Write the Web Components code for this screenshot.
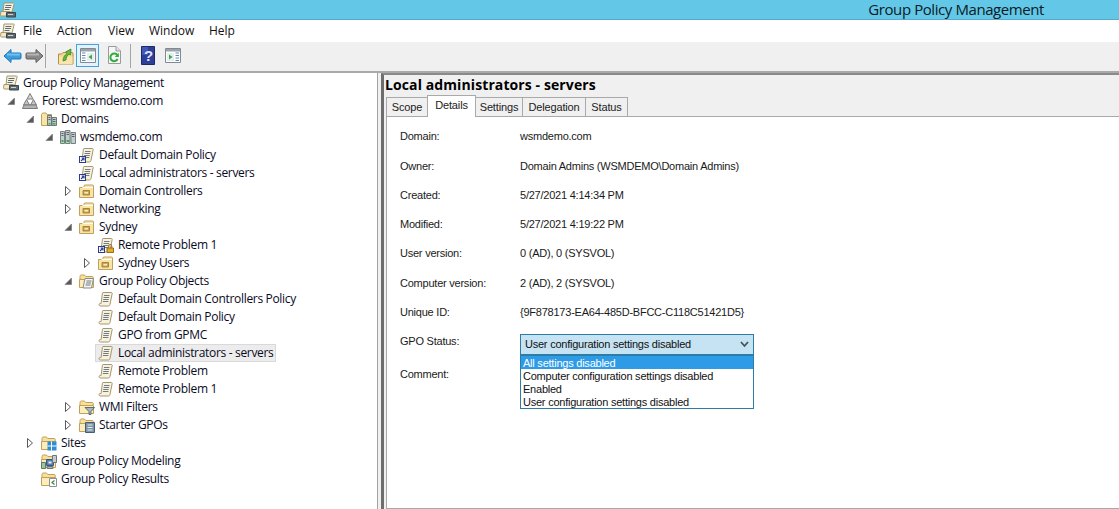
<!DOCTYPE html>
<html><head><meta charset="utf-8"><title>Group Policy Management</title>
<style>
html,body{margin:0;padding:0;height:509px;overflow:hidden;background:#f0f0f0;font-family:"Open Sans","Liberation Sans",sans-serif;color:#000}
</style></head><body>
<gp-app></gp-app>
<script>
const folderBack='<path d="M1 13.500V3.500c0-.8.500-1.500 1.200-1.500h3.300l1.300 1.500h6.400c.6 0 1 .4 1 1v9z" fill="#f7e09c" stroke="#c2a05c"/><path d="M.5 14.500V6.500h14v8z" fill="#fcedbb" stroke="#c2a05c"/>';
const scrollP='<path d="M5 1.500h8.400c.8 0 1.100.7.7 1.400L12 13.400c-.2 1-.8 1.600-1.600 1.600H2.600c-1 0-1.600-.6-1.600-1.300 0-.8.600-1.200 1.300-1.200h.8L4.400 2.500c.1-.6.3-1 .6-1z" fill="#f9f2da" stroke="#a4966f"/><path d="M6 4.500h5.500M5.600 6.500h5.500M5.200 8.500h5.500M4.900 10.500h5.500" stroke="#6f7c8c"/>';
const shortcut='<rect x="0.500" y="9.500" width="6" height="6" fill="#fff" stroke="#2d3c8f"/><path d="M2 14l2.500-2.500M2.600 11h2.400v2.400" stroke="#2d3c8f" stroke-width="1.100" fill="none"/>';
const server='<path d="M.5 2.500h4v12h-4zM5.500 1.500h4.500v13h-4.500zM11 3.500h4.500v11H11z" fill="#c3ccce" stroke="#77817f"/><path d="M1.500 4.500h2M6.500 3.500h2.500M12 5.500h2.500M1.500 6.500h2M6.500 5.500h2.500M12 7.500h2.500" stroke="#59636a"/><path d="M6.500 11h3v2h-3zM1.500 11h2v2h-2z" fill="#32b34a"/>';
const ouBody='<path d="M.5 14.500V4.500h4l1-2.500h8c.6 0 1 .4 1 1v11.500z" fill="#f9e4a8" stroke="#c2a05c"/><path d="M3.500 4.500H14" stroke="#fff"/><path d="M4 7.500h6.500v4.500H4z" fill="#d3a84c" stroke="#96742f" stroke-width=".8"/><path d="M5.500 9h3.500v1.500H5.500z" fill="#f9edc4"/>';
const ICONS={
 gpm:'<path d="M4 1h9.500c.7 0 .8.6.5 1.200L12 10H3z" fill="#f9f2da" stroke="#a4966f"/><path d="M5.500 3.500h6M5 5.500h6M4.500 7.500h5" stroke="#5c6c7c"/><path d="M1 9.500h9v4.500H1.500c-.8 0-1-.6-1-1.200z" fill="#f5e9c4" stroke="#a4966f"/><path d="M6.500 10.500h9v4.500h-9z" fill="#5f6a72" stroke="#3a444b"/><path d="M8 12.500h5" stroke="#c9d2d7"/>',
 forest:'<path d="M8 .5l3 5.500H5z" fill="#d9d9d9" stroke="#7b7b7b"/><path d="M4.500 6.500l3 5.500h-6zM11.500 6.500l3 5.500h-6z" fill="#c6c6c6" stroke="#7b7b7b"/><path d="M.5 15.500l1.500-3.500h12l1.500 3.500z" fill="#b5b5b5" stroke="#7b7b7b"/>',
 domains:'<path d="M.5 14.500V3.500l1-1.500h3.500l1 1.500h4.500v11z" fill="#f9e4a8" stroke="#c2a05c"/><path d="M6.500 4.500h4v10h-4zM11 6.500h4.500v8H11z" fill="#bfc9cb" stroke="#6d7778"/><path d="M7.500 6.500h2M12 8.500h2.500M7.500 8.500h2M12 10.500h2.500" stroke="#59636a"/><path d="M7.500 12h2v1.500h-2zM12 12h2.500v1.500H12z" fill="#32b34a"/>',
 domain:server,
 link:scrollP+shortcut,
 linklock:scrollP+shortcut+'<path d="M9 11h6.500v4.500H9z" fill="#e4ab32" stroke="#9c6f12"/><path d="M10.700 11V9c0-2 3-2 3 0v2" fill="none" stroke="#9c7d34" stroke-width="1.200"/>',
 ou:ouBody,
 scroll:scrollP,
 gpofolder:folderBack+'<path d="M6 5.500h8.500l-2 9.500H4z" fill="#f8f5ea" stroke="#858b90"/><path d="M7.500 8h5M7 10h5M6.500 12h5" stroke="#68798a"/>',
 wmi:folderBack+'<path d="M6 8.500h9.500l-3.500 4v3h-2v-3z" fill="#a9b7bd" stroke="#5d6b73"/>',
 starter:folderBack+'<path d="M6.500 5.500h9v10h-9z" fill="#7c93a9" stroke="#475d70"/><path d="M8.500 8h5M8.500 10.500h5M8.500 13h5" stroke="#e7eef3"/>',
 sites:folderBack+'<path d="M6.500 6.500h9v9h-9z" fill="#2f8ed0"/><path d="M10.500 6.500v9M6.500 11h9" stroke="#fff"/>',
 modeling:folderBack+'<path d="M.5 9.500h4v6h-4z" fill="#9fc39a" stroke="#5f7b5a"/><path d="M5.500 6.500h7v6h-7z" fill="#5c7fb3" stroke="#3a5483"/><path d="M7.500 8.500h3v2h-3z" fill="#e6edf5"/><path d="M11.500 2.500h4v7h-4z" fill="#c3ccd2" stroke="#6d7778"/><path d="M6 13.500h6v2H6z" fill="#aab3b8" stroke="#6d7778"/>',
 results:folderBack+'<path d="M8.500 7.500h7v8h-7z" fill="#fff" stroke="#8a9197"/><path d="M13.500 9.500l-2.500 2 2.500 2" fill="none" stroke="#3e7f4c" stroke-width="1.200"/>'
};
const TB={
 back:'<path d="M1 9l7-6.500V6h9c.6 0 1 .4 1 1v4c0 .6-.4 1-1 1H8v3.500z" fill="#39a0e0" stroke="#1f74b6"/><path d="M4 7.500h13" stroke="#8fd0f4" stroke-width="2" opacity=".7"/>',
 fwd:'<path d="M18 9l-7-6.500V6H2c-.6 0-1 .4-1 1v4c0 .6.400 1 1 1h9v3.500z" fill="#8a8a8a" stroke="#5d5d5d"/><path d="M2 7.500h12" stroke="#b5b5b5" stroke-width="2"/>',
 up:'<path d="M1.500 17V7h3l1.500-1.500h9c.6 0 1 .4 1 1V17z" fill="#f3d68c" stroke="#b48f46"/><path d="M2 9.500h13.500V17H2z" fill="#f9e5ac"/><path d="M6 14c0-4 2-6 4-7.500L8.500 5 14 2l-.5 6-1.500-1c-2 1.500-3 3.500-3 6z" fill="#62bb3a" stroke="#36872c" stroke-width=".8"/>',
 paneL:'<path d="M.5 1.500h15v14H.5z" fill="#fff" stroke="#7f8a92"/><path d="M1 2h14v2.500H1z" fill="#9aa3aa"/><path d="M2 6h3.500M2 8.500h3.500M2 11h3.500M2 13.500h3.500" stroke="#5b8ab0"/><path d="M7 6h7.500v8H7z" fill="#e7edf1"/><path d="M12 7.500v5L8.500 10z" fill="#39a84a"/>',
 refresh:'<path d="M1.500.5h7.500L13.500 5v12.500h-12z" fill="#f6f6f6" stroke="#9a9a9a"/><path d="M9 .5V5h4.500" fill="#e2e2e2" stroke="#9a9a9a"/><path d="M10.500 9.500A3.800 3.800 0 1 0 10.600 13" fill="none" stroke="#2fae3d" stroke-width="2"/><path d="M11.800 6.800v4.200H7.800z" fill="#2fae3d"/>',
 help:'<path d="M.5.500h13v18H.5z" fill="#2e3f99" stroke="#1c2868"/><path d="M1 1h6v8H1z" fill="#4d63c4" opacity=".7"/>',
 paneR:'<path d="M.5 1.500h15v14H.5z" fill="#fff" stroke="#7f8a92"/><path d="M1 2h14v2.500H1z" fill="#9aa3aa"/><path d="M10.500 6h3.500M10.500 8.500h3.500M10.500 11h3.500M10.500 13.500h3.500" stroke="#5b8ab0"/><path d="M2 6h7v8H2z" fill="#e7edf1"/><path d="M4 7.500v5L7.500 10z" fill="#39a84a"/>'
};
function def(name,css,html,setup){
 customElements.define(name,class extends HTMLElement{
  connectedCallback(){
   if(this.shadowRoot)return;
   const r=this.attachShadow({mode:'open'});
   r.innerHTML='<style>'+css+'</style>'+(typeof html==='function'?html(this):(html||''));
   if(setup)setup(this,r);
  }
 });
}
def('gp-icon',':host{display:block;width:16px;height:16px;flex:none}svg{display:block;width:100%;height:100%}',
 h=>'<svg viewBox="0 0 16 16">'+ICONS[h.getAttribute('name')]+'</svg>');
def('gp-titlebar',`:host{display:flex;height:19px;background:#63c8e8;border-bottom:1px solid #5aa9c6;align-items:center;flex:none}
 .t{margin-left:auto;margin-right:75px;font:15px/19px "Open Sans",sans-serif;letter-spacing:-.42px;color:#0b1a24}`,
 '<gp-icon name="gpm"></gp-icon><span class="t"><slot></slot></span>');
def('gp-menubar',`:host{display:flex;height:22px;background:#fff;align-items:center;flex:none;font:12px/22px "Open Sans",sans-serif;color:#111}
 span{display:block}`,
 `<gp-icon name="gpm"></gp-icon><span style="margin-left:7px;width:34px">File</span><span style="width:51px">Action</span><span style="width:41px">View</span><span style="width:60px">Window</span><span>Help</span>`);
def('gp-toolbtn',`:host{display:flex;align-items:center;justify-content:center;flex:none;height:23px;box-sizing:border-box}
 :host([active]){background:#e3f2fb;box-shadow:inset 0 0 0 1px #3fa5dc}svg{display:block;overflow:visible}
 .q{font:bold 15px "Liberation Sans",sans-serif;fill:#dfe6fb}`,
 h=>{const n=h.getAttribute('name');const w=+h.getAttribute('w')||16,vh=+h.getAttribute('vh')||18;
  return `<svg width="${w}" height="${vh}" viewBox="0 0 ${w} ${vh}">${TB[n]}${n==='help'?'<text class="q" x="3" y="15">?</text>':''}</svg>`;},
 (h)=>{h.style.width=(h.getAttribute('bw')||'23')+'px'});
def('gp-toolsep',':host{display:block;width:1px;height:24px;background:#a5a5a5;flex:none}');
def('gp-toolbar',`:host{display:flex;align-items:flex-start;padding-top:2px;height:27px;background:#f0f0f0;border-bottom:2px solid #a9a9a9;flex:none}`,'<slot></slot>');
def('gp-tree',`:host{display:block;width:378px;flex:none;background:#fff;border-right:1px solid #a2a2a2;padding-top:1px;box-sizing:border-box;height:100%;overflow:hidden;font:12px/18px "Open Sans",sans-serif;letter-spacing:-.32px;color:#0a0a1e}`,'<slot></slot>');
def('gp-node',`:host{display:flex;height:18px;align-items:center}
 .sp{flex:none}.ar{width:12px;height:12px;flex:none;margin-right:5px}
 .w{display:flex;align-items:center;height:18px}
 :host([selected]) .w{background:#ececec;box-shadow:inset 0 0 0 1px #d9d9d9;margin-left:-3px;padding:0 3px 0 3px}
 gp-icon{margin-right:4px}.l{white-space:nowrap}`,
 h=>{const L=+h.getAttribute('level')||0,a=h.getAttribute('arrow');
  let left;
  if(L===0&&!a) left=`<span class="sp" style="width:3px"></span>`;
  else{
   const svg=a==='open'?'<svg class="ar" viewBox="0 0 12 12"><path d="M9.500 3v6.500H3z" fill="#595959" stroke="#7a7a7a" stroke-width=".7"/></svg>'
    :a==='closed'?'<svg class="ar" viewBox="0 0 12 12"><path d="M3.500 1.500L8.500 6l-5 4.500z" fill="#fff" stroke="#5a5a5a"/></svg>'
    :'<span class="ar"></span>';
   left=`<span class="sp" style="width:${19*L-14}px"></span>${svg}`;
  }
  return `${left}<div class="w"><gp-icon name="${h.getAttribute('icon')}"></gp-icon><span class="l"><slot></slot></span></div>`;});
def('gp-tab',`:host{display:block;box-sizing:border-box;height:19px;border:1px solid #a9a9a9;border-bottom:0;background:#f0f0f0;font:11px/18px "Liberation Sans",sans-serif;letter-spacing:-.15px;color:#222;text-align:center;margin-left:-1px;flex:none}
 :host([selected]){height:22px;background:#fff;margin-bottom:-1px;position:relative;z-index:1;line-height:18px}`,'<slot></slot>');
def('gp-tabs',`:host{display:flex;align-items:flex-end;height:21px;padding-left:2px;flex:none}`,'<slot></slot>');
def('gp-prop',`:host{display:flex;font:11px/30px "Liberation Sans",sans-serif;letter-spacing:-.23px;color:#1a1a1a;flex:none}
 .k{width:120px;flex:none}.v{white-space:nowrap}`,
 h=>`<span class="k">${h.getAttribute('label')}</span><span class="v"><slot></slot></span>`,
 h=>{h.style.height=h.getAttribute('h')+'px'});
def('gp-select',`:host{display:block;position:relative;width:234px;height:21px;margin-top:8px;box-sizing:border-box;border:1px solid #2c7ea6;background:#c6e3f3;font:11px/19px "Liberation Sans",sans-serif;letter-spacing:-.23px;color:#111}
 .cur{display:flex;justify-content:space-between;align-items:center;padding:0 4px;height:19px}
 svg{display:block}
 .list{position:absolute;left:-1px;top:20px;width:234px;box-sizing:border-box;border:1px solid #2c7ea6;background:#fff;z-index:3}`,
 `<div class="cur"><span>User configuration settings disabled</span><svg width="9" height="7" viewBox="0 0 9 7"><path d="M1 1l3.500 4L8 1" fill="none" stroke="#44525c" stroke-width="1.800"/></svg></div><div class="list"><slot></slot></div>`);
def('gp-option',`:host{display:block;height:13px;font:11px/15px "Liberation Sans",sans-serif;letter-spacing:-.23px;padding-left:2px;color:#111;white-space:nowrap;overflow:visible}
 :host([selected]){background:#2e9be6;color:#fff}`,'<slot></slot>');
def('gp-details',`:host{display:flex;flex-direction:column;flex:1;min-width:0;box-sizing:border-box;border-left:3px solid #6e6e6e;border-top:2px solid #8a8a8a;margin-left:3px;padding-left:1px;background:#f0f0f0}
 h1{margin:0;font:bold 14px/20px "Open Sans","DejaVu Sans",sans-serif;color:#000;padding:0;height:20px;flex:none;letter-spacing:.1px}
 .page{flex:1;background:#fff;border:1px solid #a9a9a9;border-right:0;margin-left:1px;padding:4px 0 0 13px}`,
 h=>`<h1>${h.getAttribute('heading')}</h1><gp-tabs><slot name="tabs"></slot></gp-tabs><div class="page"><slot></slot></div>`);
def('gp-app',`:host{display:flex;flex-direction:column;height:509px;width:1119px;overflow:hidden}
 .main{display:flex;flex:1;min-height:0}`,
 `<gp-titlebar>Group Policy Management</gp-titlebar>
 <gp-menubar></gp-menubar>
 <gp-toolbar>
  <gp-toolbtn name="back" w="19" bw="24"></gp-toolbtn>
  <gp-toolbtn name="fwd" w="19" bw="21"></gp-toolbtn>
  <gp-toolsep style="margin-right:8px"></gp-toolsep>
  <gp-toolbtn name="up" w="17" bw="22"></gp-toolbtn>
  <gp-toolbtn name="paneL" active bw="23" vh="17"></gp-toolbtn>
  <gp-toolbtn name="refresh" w="15" bw="31" vh="19"></gp-toolbtn>
  <gp-toolsep style="margin-right:9px"></gp-toolsep>
  <gp-toolbtn name="help" w="14" bw="15" vh="19"></gp-toolbtn>
  <gp-toolbtn name="paneR" bw="24" vh="17" style="margin-left:6px"></gp-toolbtn>
 </gp-toolbar>
 <div class="main">
 <gp-tree>
  <gp-node icon="gpm">Group Policy Management</gp-node>
  <gp-node level="1" arrow="open" icon="forest">Forest: wsmdemo.com</gp-node>
  <gp-node level="2" arrow="open" icon="domains">Domains</gp-node>
  <gp-node level="3" arrow="open" icon="domain">wsmdemo.com</gp-node>
  <gp-node level="4" icon="link">Default Domain Policy</gp-node>
  <gp-node level="4" icon="link">Local administrators - servers</gp-node>
  <gp-node level="4" arrow="closed" icon="ou">Domain Controllers</gp-node>
  <gp-node level="4" arrow="closed" icon="ou">Networking</gp-node>
  <gp-node level="4" arrow="open" icon="ou">Sydney</gp-node>
  <gp-node level="5" icon="linklock">Remote Problem 1</gp-node>
  <gp-node level="5" arrow="closed" icon="ou">Sydney Users</gp-node>
  <gp-node level="4" arrow="open" icon="gpofolder">Group Policy Objects</gp-node>
  <gp-node level="5" icon="scroll">Default Domain Controllers Policy</gp-node>
  <gp-node level="5" icon="scroll">Default Domain Policy</gp-node>
  <gp-node level="5" icon="scroll">GPO from GPMC</gp-node>
  <gp-node level="5" icon="scroll" selected>Local administrators - servers</gp-node>
  <gp-node level="5" icon="scroll">Remote Problem</gp-node>
  <gp-node level="5" icon="scroll">Remote Problem 1</gp-node>
  <gp-node level="4" arrow="closed" icon="wmi">WMI Filters</gp-node>
  <gp-node level="4" arrow="closed" icon="starter">Starter GPOs</gp-node>
  <gp-node level="2" arrow="closed" icon="sites">Sites</gp-node>
  <gp-node level="2" icon="modeling">Group Policy Modeling</gp-node>
  <gp-node level="2" icon="results">Group Policy Results</gp-node>
 </gp-tree>
 <gp-details heading="Local administrators - servers">
  <gp-tab slot="tabs" style="width:42px">Scope</gp-tab>
  <gp-tab slot="tabs" selected style="width:49px">Details</gp-tab>
  <gp-tab slot="tabs" style="width:48px">Settings</gp-tab>
  <gp-tab slot="tabs" style="width:64px">Delegation</gp-tab>
  <gp-tab slot="tabs" style="width:43px">Status</gp-tab>
  <gp-prop label="Domain:" h="30">wsmdemo.com</gp-prop>
  <gp-prop label="Owner:" h="29">Domain Admins (WSMDEMO\\Domain Admins)</gp-prop>
  <gp-prop label="Created:" h="29">5/27/2021 4:14:34 PM</gp-prop>
  <gp-prop label="Modified:" h="29">5/27/2021 4:19:22 PM</gp-prop>
  <gp-prop label="User version:" h="30">0 (AD), 0 (SYSVOL)</gp-prop>
  <gp-prop label="Computer version:" h="29">2 (AD), 2 (SYSVOL)</gp-prop>
  <gp-prop label="Unique ID:" h="29">{9F878173-EA64-485D-BFCC-C118C51421D5}</gp-prop>
  <gp-prop label="GPO Status:" h="33">
   <gp-select>
    <gp-option selected>All settings disabled</gp-option>
    <gp-option>Computer configuration settings disabled</gp-option>
    <gp-option>Enabled</gp-option>
    <gp-option>User configuration settings disabled</gp-option>
   </gp-select>
  </gp-prop>
  <gp-prop label="Comment:" h="30"></gp-prop>
 </gp-details>
 </div>`);
</script>
</body></html>
